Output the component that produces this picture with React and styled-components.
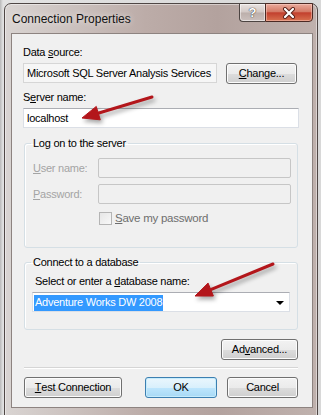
import React from "react";
import styled, { createGlobalStyle } from "styled-components";

const GlobalStyle = createGlobalStyle`
  html, body {
    margin: 0;
    padding: 0;
  }

  body {
    background: #d8d8d8;
    font-family: "Liberation Sans", Arial, sans-serif;
    overflow: hidden;
  }
`;

function Arrow({ x1, y1, x2, y2 }) {
  const dx = x2 - x1;
  const dy = y2 - y1;
  const len = Math.hypot(dx, dy);
  const ux = dx / len;
  const uy = dy / len;
  const headLen = 17;
  const half = 7;
  const bx = x2 - ux * headLen;
  const by = y2 - uy * headLen;
  const px = -uy * half;
  const py = ux * half;
  const head = `${x2},${y2} ${bx + px},${by + py} ${bx - px},${by - py}`;

  return (
    <g>
      <line x1={x1} y1={y1} x2={bx + ux * 2} y2={by + uy * 2} strokeWidth="3" strokeLinecap="round" />
      <polygon points={head} />
    </g>
  );
}

export default function App() {
  return (
    <Page>
      <GlobalStyle />
      <Window>
        <TitleBar>
          <Title>Connection Properties</Title>
          <CaptionButtons>
            <HelpButton>?</HelpButton>
            <CloseButton>
              <svg width="14" height="12" viewBox="0 0 14 12">
                <path d="M3 2 L11 10 M11 2 L3 10" stroke="#5a2018" strokeWidth="4" strokeLinecap="round" />
                <path d="M3 2 L11 10 M11 2 L3 10" stroke="#ffffff" strokeWidth="2.2" strokeLinecap="round" />
              </svg>
            </CloseButton>
          </CaptionButtons>
        </TitleBar>

        <Client>
          <Label>
            Data <u>s</u>ource:
          </Label>
          <Row>
            <ReadOnlyBox>Microsoft SQL Server Analysis Services</ReadOnlyBox>
            <Button $width={71} $ml={9}>
              <u>C</u>hange...
            </Button>
          </Row>

          <Label $mt={7}>
            S<u>e</u>rver name:
          </Label>
          <TextBox>localhost</TextBox>

          <Group $mt={9} $pb={22}>
            <Legend>Log on to the server</Legend>
            <FieldRow $mt={8}>
              <FieldLabel>
                <u>U</u>ser name:
              </FieldLabel>
              <DisabledBox />
            </FieldRow>
            <FieldRow $mt={6}>
              <FieldLabel>
                <u>P</u>assword:
              </FieldLabel>
              <DisabledBox />
            </FieldRow>
            <CheckRow>
              <CheckBox />
              <CheckText>
                <u>S</u>ave my password
              </CheckText>
            </CheckRow>
          </Group>

          <Group $mt={8} $pb={17}>
            <Legend>Connect to a database</Legend>
            <DbLabel>
              Select or enter a <u>d</u>atabase name:
            </DbLabel>
            <Combo>
              <Selected>Adventure Works DW 2008</Selected>
              <DropArrow />
            </Combo>
          </Group>

          <AdvancedRow>
            <Button $width={77}>
              Ad<u>v</u>anced...
            </Button>
          </AdvancedRow>

          <Separator />

          <ButtonRow>
            <Button $width={98}>
              <u>T</u>est Connection
            </Button>
            <Spacer />
            <Button $width={72} $default>
              OK
            </Button>
            <Button $width={71} $ml={10}>
              Cancel
            </Button>
          </ButtonRow>
        </Client>
      </Window>

      <Overlay width="321" height="415" viewBox="0 0 321 415">
        <Arrow x1={152} y1={97} x2={82} y2={118} />
        <Arrow x1={273} y1={264} x2={195} y2={296} />
      </Overlay>
    </Page>
  );
}

const Page = styled.div`
  position: relative;
  width: 321px;
  height: 415px;
  overflow: hidden;
  padding: 3px 0 0 4px;
  box-sizing: border-box;
  background: linear-gradient(to right, #b9b9b9 0, #e2e2e2 3px, #d8d8d8 100%);
`;

const Window = styled.div`
  width: 314px;
  height: 420px;
  box-sizing: border-box;
  border: 1px solid #4f4745;
  border-radius: 7px 7px 0 0;
  background: linear-gradient(
    to right,
    #d9d4d2 0%,
    #cbc1be 22%,
    #bcaca8 45%,
    #b3a29e 68%,
    #bfb1ad 100%
  );
  box-shadow: inset 0 0 0 1px rgba(255, 255, 255, 0.45);
  display: flex;
  flex-direction: column;
`;

const TitleBar = styled.div`
  display: flex;
  align-items: flex-start;
  height: 29px;
  padding: 0 4px 0 7px;
`;

const Title = styled.div`
  padding-top: 8px;
  font-size: 12px;
  line-height: 14px;
  color: #111;
  text-shadow: 0 0 6px rgba(255, 255, 255, 0.8);
`;

const CaptionButtons = styled.div`
  display: flex;
  margin-left: auto;
  margin-top: -1px;
`;

const HelpButton = styled.div`
  width: 26px;
  height: 19px;
  box-sizing: border-box;
  border: 1px solid #4c4442;
  border-right: none;
  border-radius: 0 0 0 4px;
  background: linear-gradient(#e9e3e1 0%, #d2c8c5 48%, #bcafab 52%, #cbc0bd 100%);
  box-shadow: inset 0 0 0 1px rgba(255, 255, 255, 0.5);
  color: #ffffff;
  font-size: 13px;
  font-weight: 700;
  line-height: 18px;
  text-align: center;
  text-shadow: 0 0 1px #333, 0 0 1px #333;
`;

const CloseButton = styled.div`
  width: 48px;
  height: 19px;
  box-sizing: border-box;
  border: 1px solid #4c2a24;
  border-radius: 0 0 4px 0;
  background: linear-gradient(#eaaa9c 0%, #d47a66 45%, #c2402e 52%, #d8714f 100%);
  box-shadow: inset 0 0 0 1px rgba(255, 220, 210, 0.45);
  display: flex;
  align-items: center;
  justify-content: center;
`;

const Client = styled.div`
  margin: 0 4px 0 6px;
  height: 375px;
  box-sizing: border-box;
  border: 1px solid #8d8380;
  background: #f0f0f0;
  padding: 12px 13px 0 11px;
  display: flex;
  flex-direction: column;
  font-size: 11px;
  line-height: 13px;
  letter-spacing: -0.25px;
  color: #000;
`;

const Label = styled.div`
  margin-top: ${(p) => p.$mt || 0}px;
  height: 13px;
`;

const Row = styled.div`
  display: flex;
  align-items: flex-start;
  margin-top: 4px;
`;

const ReadOnlyBox = styled.div`
  width: 194px;
  height: 20px;
  box-sizing: border-box;
  border: 1px solid #d6d6d6;
  background: #f6f6f6;
  padding: 3px 3px 0;
  white-space: nowrap;
  overflow: hidden;
`;

const TextBox = styled.div`
  margin-top: 4px;
  height: 20px;
  box-sizing: border-box;
  border: 1px solid #dbdfe6;
  border-top-color: #abadb3;
  background: #ffffff;
  padding: 3px 3px 0;
`;

const Button = styled.div`
  width: ${(p) => p.$width}px;
  height: 21px;
  margin-left: ${(p) => p.$ml || 0}px;
  box-sizing: border-box;
  border: 1px solid ${(p) => (p.$default ? "#3c7fb1" : "#707070")};
  border-radius: 3px;
  background: ${(p) =>
    p.$default
      ? "linear-gradient(#eaf6fd 0%, #d9f0fc 50%, #bee6fd 51%, #a7d9f5 100%)"
      : "linear-gradient(#f2f2f2 0%, #ebebeb 50%, #dddddd 51%, #cfcfcf 100%)"};
  box-shadow: inset 0 0 0 1px ${(p) => (p.$default ? "#c6ecfc" : "#fcfcfc")};
  display: flex;
  align-items: center;
  justify-content: center;
  white-space: nowrap;
`;

const Group = styled.fieldset`
  margin: ${(p) => p.$mt}px 1px 0 1px;
  padding: 0 6px ${(p) => p.$pb}px 7px;
  border: 1px solid #d5dfe5;
  border-radius: 3px;
  box-shadow: inset 1px 1px 0 #ffffff;
  min-width: 0;
`;

const Legend = styled.legend`
  padding: 0 2px;
  margin-left: -1px;
  height: 13px;
  line-height: 13px;
`;

const FieldRow = styled.div`
  display: flex;
  align-items: center;
  margin-top: ${(p) => p.$mt}px;
  padding-left: 1px;
`;

const FieldLabel = styled.div`
  width: 66px;
  color: #a4a4a4;
`;

const DisabledBox = styled.div`
  width: 196px;
  height: 20px;
  box-sizing: border-box;
  border: 1px solid #c6c6c6;
  border-radius: 2px;
  background: #f0f0f0;
`;

const CheckRow = styled.div`
  display: flex;
  align-items: center;
  margin: 8px 0 0 67px;
`;

const CheckBox = styled.div`
  width: 13px;
  height: 13px;
  box-sizing: border-box;
  border: 1px solid #b4b4b4;
  background: linear-gradient(135deg, #e6e6e6, #f8f8f8);
`;

const CheckText = styled.div`
  margin-left: 3px;
  color: #6e6e6e;
  font-size: 11.5px;
`;

const DbLabel = styled.div`
  margin-top: 6px;
  padding-left: 3px;
  height: 13px;
`;

const Combo = styled.div`
  margin-top: 4px;
  width: 258px;
  height: 20px;
  box-sizing: border-box;
  border: 1px solid #dbdfe6;
  border-top-color: #abadb3;
  background: #ffffff;
  padding: 2px 1px 0;
  display: flex;
  align-items: flex-start;
`;

const Selected = styled.span`
  background: #3399ff;
  color: #ffffff;
  padding: 1px 1px 2px;
  white-space: nowrap;
`;

const DropArrow = styled.span`
  margin: 6px 4px 0 auto;
  width: 0;
  height: 0;
  border-left: 4px solid transparent;
  border-right: 4px solid transparent;
  border-top: 4px solid #000;
`;

const AdvancedRow = styled.div`
  display: flex;
  justify-content: flex-end;
  margin: 9px 1px 0 0;
`;

const Separator = styled.div`
  margin: 7px 1px 0 1px;
  height: 1px;
  background: #d5d5d5;
  box-shadow: 0 1px 0 #ffffff;
`;

const ButtonRow = styled.div`
  display: flex;
  margin: 9px 1px 0 1px;
`;

const Spacer = styled.div`
  flex: 1;
`;

const Overlay = styled.svg`
  position: absolute;
  top: 0;
  left: 0;
  pointer-events: none;
  fill: #b3161b;
  stroke: #b3161b;
  filter: drop-shadow(2px 3px 2px rgba(0, 0, 0, 0.35));
`;
